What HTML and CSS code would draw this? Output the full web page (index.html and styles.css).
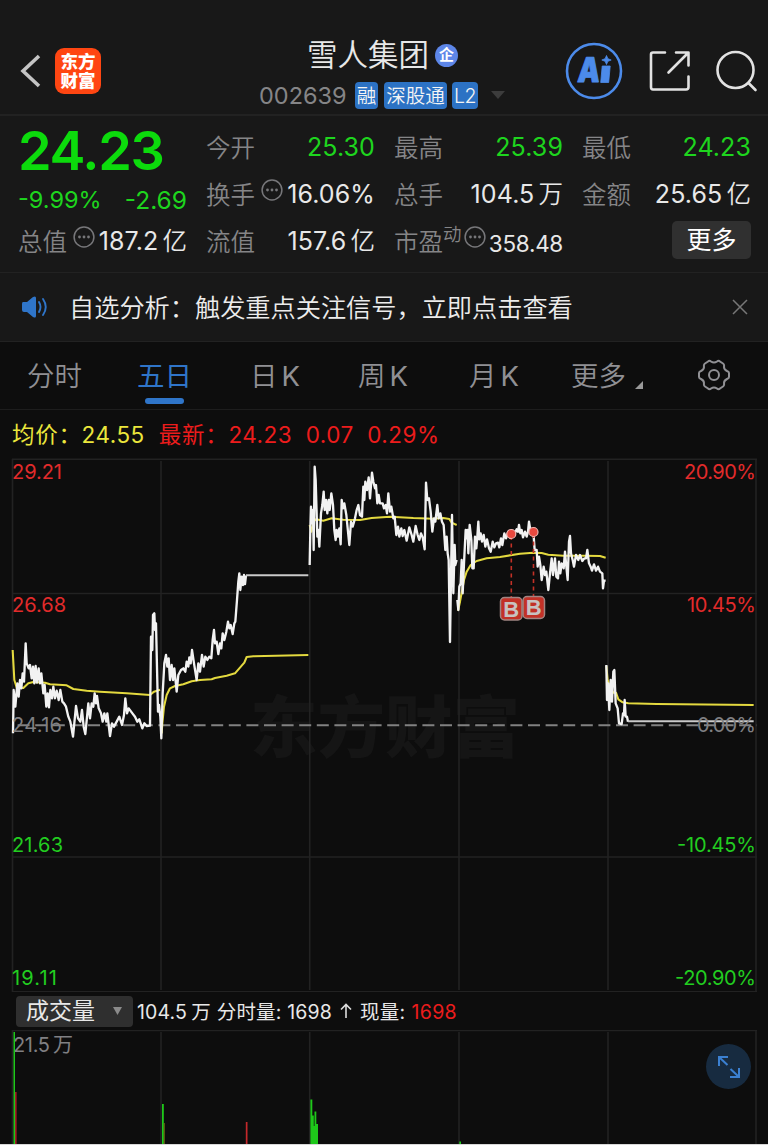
FILE: index.html
```html
<!DOCTYPE html>
<html lang="zh-CN">
<head>
<meta charset="utf-8">
<title>雪人集团 002639</title>
<link rel="stylesheet" href="styles.css">
</head>
<body>
<header class="header">
  <div class="header-left">
    <svg class="back" width="22" height="36" viewBox="0 0 22 36"><path d="M20 3 4 18 20 33" fill="none" stroke="#c4c4c4" stroke-width="3.600"/></svg>
    <div class="logo"><span>东方</span><span>财富</span></div>
  </div>
  <div class="stock">
    <div class="stock-name"><span>雪人集团</span><i class="corp">企</i></div>
    <div class="stock-code"><span class="code">002639</span><b class="tag">融</b><b class="tag wide">深股通</b><b class="tag lv">L2</b><svg width="14" height="8" viewBox="0 0 14 8"><path d="M0 0h14L7 8z" fill="#3c3c3c"/></svg></div>
  </div>
  <div class="header-right">
    <svg width="58" height="58" viewBox="0 0 58 58"><circle cx="29" cy="29" r="27" fill="none" stroke="#4c8bea" stroke-width="2.600"/><text transform="translate(12 40) skewX(-5) scale(.82 1)" class="ai">A</text><path d="M37.200 24h8l-1.500 16.500h-8z M41.500 13.500l1.400 3.200 3.300 1.300-3.300 1.300-1.400 3.200-1.400-3.200-3.300-1.300 3.300-1.300z" fill="#4c8bea" stroke="#4c8bea" stroke-width=".8" stroke-linejoin="round"/></svg>
    <svg width="42" height="42" viewBox="0 0 42 42" fill="none" stroke="#e2e2e2" stroke-width="2.600" stroke-linecap="round" stroke-linejoin="round"><path d="M16 2.500H4Q2 2.500 2 4.500V37Q2 39.500 4 39.500H37Q39.500 39.500 39.500 37V26.500M27 2.500H39.500V15.500M39 3 19.500 22.500"/></svg>
    <svg width="42" height="42" viewBox="0 0 42 42" fill="none" stroke="#e2e2e2" stroke-width="2.600" stroke-linecap="round"><circle cx="19.500" cy="20" r="18"/><path d="m32.500 33 7 7"/></svg>
  </div>
</header>

<section class="quote">
  <div class="col first">
    <div class="price">24.23</div>
    <div class="change"><span>-9.99%</span><span>-2.69</span></div>
    <div class="cell"><span class="label">总值</span><svg class="dots" viewBox="0 0 22 22"><use href="#more-dots"/></svg><span class="value">187.2<em>亿</em></span></div>
  </div>
  <div class="col">
    <div class="cell"><span class="label">今开</span><span class="value green">25.30</span></div>
    <div class="cell"><span class="label">换手</span><svg class="dots" viewBox="0 0 22 22"><use href="#more-dots"/></svg><span class="value">16.06%</span></div>
    <div class="cell"><span class="label">流值</span><span class="value">157.6<em>亿</em></span></div>
  </div>
  <div class="col">
    <div class="cell"><span class="label">最高</span><span class="value green">25.39</span></div>
    <div class="cell"><span class="label">总手</span><span class="value">104.5<em>万</em></span></div>
    <div class="cell"><span class="label">市盈</span><span class="sup">动</span><svg class="dots tight" viewBox="0 0 22 22"><use href="#more-dots"/></svg><span class="value small">358.48</span></div>
  </div>
  <div class="col">
    <div class="cell"><span class="label">最低</span><span class="value green">24.23</span></div>
    <div class="cell"><span class="label">金额</span><span class="value">25.65<em>亿</em></span></div>
    <div class="cell more-row"><span class="more">更多</span></div>
  </div>
</section>

<section class="notice">
  <svg width="28" height="22" viewBox="0 0 28 22"><path d="M1 6h4l6-5Q14-.5 14 2V20q0 2.500-3 1L5 16H2Q0 16 0 14V8q0-2 1-2z" fill="#2f75c9"/><path d="M17 6q3 5 0 10M21 3q5.500 8 0 16" fill="none" stroke="#2f75c9" stroke-width="1.900" stroke-linecap="round"/></svg>
  <span class="notice-text">自选分析：触发重点关注信号，立即点击查看</span>
  <svg width="16" height="16" viewBox="0 0 16 16"><path d="M1 1 15 15M15 1 1 15" stroke="#777" stroke-width="1.500"/></svg>
</section>

<nav class="tabs">
  <span class="tab">分时</span>
  <span class="tab active">五日</span>
  <span class="tab">日<u>K</u></span>
  <span class="tab">周<u>K</u></span>
  <span class="tab">月<u>K</u></span>
  <span class="tab drop">更多<svg width="8" height="8" viewBox="0 0 8 8"><path d="M8 0V8H0z" fill="#999"/></svg></span>
  <svg class="gear" width="34" height="32" viewBox="0 0 34 32" fill="none" stroke="#909094" stroke-width="2"><path d="M11 2.500Q12.500 1 14 2.500Q17 4.500 20 2.500Q21.500 1 23 2.500L26 4.500Q27.500 5.500 27 8Q27 10.500 30 12Q32 12.800 32 14V18Q32 19.200 30 20Q27 21.500 27 24Q27.500 26.500 26 27.500L23 29.500Q21.500 31 20 29.500Q17 27.500 14 29.500Q12.500 31 11 29.500L8 27.500Q6.500 26.500 7 24Q7 21.500 4 20Q2 19.200 2 18V14Q2 12.800 4 12Q7 10.500 7 8Q6.500 5.500 8 4.500Z"/><circle cx="17" cy="16" r="5"/></svg>
</nav>

<div class="legend">
  <span class="avg key">均价：</span><span class="avg n1">24.55</span>
  <span class="latest key">最新：</span><span class="latest n2">24.23</span><span class="latest n3">0.07</span><span class="latest">0.29%</span>
</div>

<svg class="chart" width="768" height="534" viewBox="0 458 768 534">
  <text class="watermark" x="250" y="752" textLength="270">东方财富</text>
  <g class="grid">
    <path d="M12 459.200H757M12 593.500H757M12 857H757M12 991.700H757M12.500 459V992M161 461V990M309.700 461V990M459 461V990M608 461V990M756 459V992"/>
  </g>
  <path d="M12 725.200H757" stroke="#818181" stroke-width="2" stroke-dasharray="12 5.600" stroke-dashoffset="12"/>
  <g class="red axis"><text x="12" y="478.500" textLength="50">29.21</text><text x="12" y="611.500" textLength="54">26.68</text><text x="684" y="478.500" textLength="72">20.90%</text><text x="687" y="611.500" textLength="69">10.45%</text></g>
  <g class="green axis"><text x="12" y="852" textLength="51">21.63</text><text x="12" y="985" textLength="45">19.11</text><text x="677" y="852" textLength="79">-10.45%</text><text x="675" y="985" textLength="81">-20.90%</text></g>
  <g class="line avgline" transform="translate(0 450) scale(.33333)">
    <path d="M38 600 43 690 50 712 70 714 85 700 100 696 135 698 150 703 200 706 220 717 260 722 300 725 380 730 450 735 462 725 480 719"/>
    <path d="M485 850 487 820 492 770 500 735 510 715 525 708 550 703 575 694 600 690 635 688 645 684 680 677 705 670 718 655 733 638 740 621 760 619 925 615"/>
  </g>
  <g class="line avgline" transform="translate(300 450) scale(.33333)">
    <path d="M29 225 34 245 40 215 48 208 70 212 95 205 130 209 180 210 215 204 270 200 340 204 400 206 430 204 448 207 455 218 470 225"/>
  </g>
  <g class="line avgline" transform="translate(440 450) scale(.33333)">
    <path d="M54 482 60 455 72 390 80 365 92 345 110 333 140 325 180 321 240 311 280 308 305 309 325 314 370 317 430 317 480 318 497 323"/>
    <path d="M499 648 503 690 510 712 520 728 528 728 535 748 548 757 565 760 650 762 941 765"/>
  </g>
  <g class="line" transform="translate(0 450) scale(.33333)">
    <path d="M39 850 41 720 46 770 52 700 56 740 60 690 64 715 68 670 72 695 77 580 80 640 86 655 90 645 95 685 99 650 103 700 107 648 111 698 116 655 120 700 124 670 130 730 134 705 139 770 143 730 147 772 151 720 156 745 160 710 165 745 170 722 176 750 181 720 187 755 192 760 198 770 205 800 211 815 219 860 228 768 234 805 241 815 246 780 251 830 256 852 265 760 270 805 275 760 280 770 284 730 288 760 291 738 296 775 303 790 308 815 313 790 319 815 322 790 330 858 336 820 342 830 350 815 358 800 366 825 372 795 376 745 381 790 386 775 395 787 405 800 412 815 418 808 427 835 433 820 440 828 450 827 453 560 457 600 459 495 463 490 465 540 468 520 474 785 477 765 481 800 484 865 488 730 493 640 498 615 502 650 506 625 510 690 515 645 519 690 523 655 530 725 535 675 543 660 550 655 556 665 560 635 565 650 568 622 572 640 576 600 582 640 590 690 595 640 600 665 606 615 611 650 616 620 622 630 628 620 634 625 638 570 642 540 645 580 650 575 655 612 660 580 664 595 668 550 673 570 679 545 684 515 688 535 692 525 698 552 703 520 706 515 711 450 715 395 718 370 721 420 725 380 729 405 732 375 735 402 738 376"/>
    <path class="flat" d="M738 376H925"/>
  </g>
  <g class="line" transform="translate(300 450) scale(.33333)">
    <path d="M29 345 31 240 33 170 36 220 39 180 41 300 44 50 47 90 52 260 55 240 58 290 63 190 67 165 71 125 74 180 78 150 82 190 86 150 89 180 94 130 99 165 103 240 107 270 110 240 114 260 118 235 122 283 125 150 129 175 133 160 139 195 148 285 153 215 158 230 165 205 170 180 175 165 180 195 186 200 190 110 193 150 196 95 201 120 206 82 210 145 216 68 220 95 225 115 228 105 232 160 236 135 240 160 248 160 252 175 257 165 261 190 265 130 270 185 274 170 280 205 284 200 289 255 294 230 298 260 304 235 308 258 313 240 320 272 328 232 335 255 340 275 347 228 353 255 358 270 363 250 368 262 374 298 378 98 382 150 387 145 392 185 397 245 402 205 406 215 412 165 416 205 421 190 426 215 431 225 436 300 440 260 443 310 446 330 450 576 456 195 460 430 464 285 466 345 470 330"/>
  </g>
  <g class="line" transform="translate(440 450) scale(.33333)">
    <path d="M52 450 55 480 58 410 62 400 65 330 68 430 72 340 77 240 80 265 83 240 85 310 89 225 94 270 97 355 101 355 105 260 109 295 112 260 115 215 118 268 122 250 126 275 131 255 136 290 141 268 147 295 152 305 158 275 163 292 168 280 174 278 178 292 183 265 187 285 193 250 198 265 205 245 213 252 222 255 230 238 234 245 237 225 241 250 245 240 249 262 255 245 260 260 264 245 267 215 271 240 280 245 284 300 290 300 293 350 297 320 301 345 305 390 311 350 315 375 319 365 325 420 330 370 335 325 339 375 345 325 349 380 354 385 357 335 361 370 365 340 371 355 375 305 379 350 383 390 387 275 390 258 393 310 398 330 402 350 408 315 415 330 420 315 427 333 433 325 438 325 442 300 447 340 452 350 456 362 462 343 468 362 474 350 480 365 487 370 489 415 492 392 497 392"/>
    <path d="M499 645 501 750 504 700 508 780 512 690 516 755 520 665 523 660 527 760 533 775 537 820 545 822 549 790 552 795 554 750 557 800 561 800 564 815"/>
    <path class="flat" d="M564 814H941"/>
  </g>
  <g class="gray axis"><text x="12" y="731.500" textLength="50">24.16</text><text x="697" y="731.500" textLength="59">0.00%</text></g>
  <g class="marks">
    <path d="M511.300 536V597M533.500 534V597" stroke="#c23127" stroke-width="1.600" stroke-dasharray="4 3.500"/>
    <circle cx="511.300" cy="534" r="4.500"/><circle cx="533.500" cy="532" r="4.500"/>
    <rect x="500.500" y="597.500" width="21.500" height="22.500" rx="4"/><rect x="523" y="596.500" width="21.500" height="22" rx="4"/>
    <text x="511.300" y="616.500">B</text><text x="533.600" y="615">B</text>
  </g>
</svg>

<div class="volume-bar">
  <div class="select"><span>成交量</span><svg width="9" height="8" viewBox="0 0 9 8"><path d="M0 0h9L4.500 8z" fill="#8a8a8a"/></svg></div>
  <span class="vt t1">104.5<em>万</em></span><span class="vt t2">分时量: 1698</span>
  <svg class="up" width="14" height="16" viewBox="0 0 14 16"><path d="M7 15V1.500M2 6.500l5-5 5 5" fill="none" stroke="#ddd" stroke-width="1.600"/></svg>
  <span class="vt t3">现量: <b class="latest">1698</b></span>
</div>

<div class="volume">
  <svg width="768" height="114" viewBox="0 1030 768 114">
    <g class="grid"><path d="M12 1030.500H757M12.500 1030V1144M161 1032V1144M309.700 1032V1144M459 1032V1144M608 1032V1144M756 1030V1144"/></g>
    <g class="gray axis"><text x="13" y="1052" textLength="37">21.5</text><text x="53" y="1052" textLength="19">万</text></g>
    <g fill="#1ec81a"><path d="M13.500 1032H15V1144H13.500zM162 1104h1.800v40H162zM310.400 1099.500h1.900v16h1.500V1126h.7v-14.500h1.800V1124h1.700v20h-7.600zM459.300 1141.500h1.700v2.500h-1.700z"/></g>
    <g fill="#c4282b"><path d="M15.200 1092h1.300v52h-1.300zM245.800 1122h1.700v22h-1.700z"/></g>
    <path d="M163.800 1123h.9v21h-.9z" fill="#806f17"/>
  </svg>
  <button class="expand" aria-label="全屏"><svg width="24" height="24" viewBox="0 0 24 24" fill="none" stroke="#3b80d1" stroke-width="2"><path d="M2 11V2H11M2 2l8.500 8M22 13v9H13M22 22l-8.500-8"/></svg></button>
</div>
<svg class="defs" width="0" height="0"><defs><g id="more-dots"><circle cx="11" cy="11" r="9.900" fill="none" stroke="#77777a" stroke-width="1.500"/><g fill="#77777a"><circle cx="6.500" cy="11" r="1.400"/><circle cx="11" cy="11" r="1.400"/><circle cx="15.500" cy="11" r="1.400"/></g></g></defs></svg>
</body>
</html>
```

FILE: styles.css
```css
* { box-sizing: border-box; }
body {
  margin: 0;
  width: 768px;
  height: 1145px;
  overflow: hidden;
  background: #0d0d0d;
  color: #e8e8e8;
  font-family: Inter, "Noto Sans CJK SC", sans-serif;
  border-bottom: 1px solid #d8d8d8;
  display: flex;
  flex-direction: column;
}
svg { display: block; flex: none; }
em, i, b, u { font-style: normal; font-weight: 400; text-decoration: none; }
span { white-space: nowrap; }

.header {
  height: 116px;
  flex: none;
  background: #181818;
  border-bottom: 2px solid #222;
  display: grid;
  grid-template-columns: 259px 1fr 203px;
  padding-top: 34px;
}
.header-left { display: flex; align-items: center; padding-left: 19px; gap: 14px; height: 74px; }
.logo {
  width: 46px; height: 46px; border-radius: 9px;
  background: #ff4612; color: #fff;
  font-size: 17.500px; font-weight: 900; line-height: 19px;
  display: flex; flex-direction: column; align-items: center; justify-content: center;
}
.stock-name { display: flex; align-items: center; gap: 6px; padding-left: 48px; height: 42px; font-size: 30.500px; font-weight: 350; line-height: 42px; }
.stock-name > span { margin-top: -1px; }
.corp { width: 23px; height: 23px; border-radius: 50%; background: #5d86e8; color: #fff; font-size: 15px; font-weight: 700; line-height: 22px; text-align: center; }
.stock-code { display: flex; align-items: center; height: 38px; white-space: nowrap; }
.code { width: 87px; font-size: 23.500px; color: #858587; margin-right: 9px; }
.tag { width: 23px; height: 27px; border-radius: 4px; background: #2c72c4; color: #f4f4f4; font-size: 19.500px; font-weight: 350; line-height: 28px; text-align: center; margin-right: 6px; }
.tag.wide { width: 63px; margin-right: 5px; }
.tag.lv { width: 26px; margin-right: 13px; letter-spacing: -.5px; }
.header-right { display: flex; align-items: center; gap: 25.500px; height: 74px; }
.ai { font: 900 34px Inter, sans-serif; fill: #4c8bea; stroke: #4c8bea; stroke-width: 1px; stroke-linejoin: round; }

.quote {
  height: 157px; flex: none; background: #181818;
  border-bottom: 1px solid #222;
  display: grid; grid-template-columns: repeat(4, 169px); gap: 19px;
  padding: 8px 18px;
}
.col { display: grid; grid-template-rows: 47px 47px 47px; }
.first { grid-template-rows: 61px 33px 47px; }
.price { color: #0cdb0c; font-size: 54px; font-weight: 600; line-height: 53px; letter-spacing: -1.300px; }
.change { display: flex; justify-content: space-between; align-items: center; padding-bottom: 4px; color: #1ed51e; font-size: 23.500px; }
.change span:last-child { font-size: 24.500px; }
.cell { display: flex; align-items: center; font-size: 25px; line-height: 44px; }
.label { color: #858587; font-size: 24.500px; font-weight: 350; line-height: 46px; }
.value { margin-left: auto; letter-spacing: .1px; margin-top: -1px; }
.value em { margin-left: 4px; font-size: 24.500px; font-weight: 350; }
.green { color: #1ed51e; }
.small { font-size: 22.500px; letter-spacing: -.3px; padding-top: 5px; }
.dots { width: 22px; height: 22px; margin: -10px 0 0 6px; }
.sup { color: #858587; font-size: 18.500px; font-weight: 350; margin-top: -16px; }
.tight { margin-left: 2px; }
.more-row { justify-content: flex-end; }
.more { width: 79px; height: 38px; margin-top: -3px; border-radius: 5px; background: #303030; line-height: 38px; text-align: center; color: #fff; }

.notice { height: 69px; flex: none; background: #181818; border-bottom: 1px solid #222; display: flex; align-items: center; padding: 0 20px 0 22px; }
.notice-text { margin: -3px auto 0 19px; font-size: 25.200px; font-weight: 350; color: #ececec; }

.tabs { height: 68px; flex: none; border-bottom: 1px solid #1d1d1d; display: flex; align-items: center; padding-left: 27px; color: #909094; font-size: 27.500px; font-weight: 350; }
.tab { position: relative; height: 67px; line-height: 69px; width: 110px; flex: none; }
.tab u { margin-left: 4px; }
.tab:nth-child(2) { width: 113px; }
.tab:nth-child(3) { width: 108px; }
.tab:nth-child(4) { width: 111px; }
.tab:nth-child(5) { width: 102px; }
.drop { display: flex; gap: 9px; width: 126px; }
.drop svg { margin-top: 39px; }
.gear { margin-top: -1px; }
.active { color: #2f75c9; font-weight: 400; }
.active::after { content: ""; position: absolute; left: 8px; bottom: 5px; width: 39px; height: 6px; border-radius: 3px; background: #2f75c9; }

.legend { height: 48px; flex: none; display: flex; align-items: center; padding: 2px 0 0 12px; font-size: 22.500px; line-height: 46px; letter-spacing: .5px; }
.key { letter-spacing: .7px; margin-top: -1px; }
.avg { color: #ebe63c; }
.latest { color: #ec1c1c; }
.n1 { margin-right: 14px; }
.n2, .n3 { margin-right: 13.500px; }

.grid path { fill: none; stroke: #222; stroke-width: 1.600; }
.line path { fill: none; stroke: #f2f2f2; stroke-width: 7; stroke-linejoin: round; }
.line .flat { stroke: #c9c9c9; stroke-width: 6; }
.line.avgline path { stroke: #e3d93f; stroke-width: 6.200; }
.axis { font-size: 20px; }
.red { fill: #e22b2b; }
.axis.green { fill: #22cd20; }
.gray { fill: #808083; }
.watermark { font-size: 67.500px; font-weight: 900; fill: #151515; }
.marks circle { fill: #e8493f; stroke: #eeb4af; stroke-width: 1.200; }
.marks rect { fill: #c23127; stroke: #a08582; stroke-width: 1.500; }
.marks text { font: 700 22px "Liberation Sans", sans-serif; fill: #c8c2c1; text-anchor: middle; }

.volume-bar { height: 38px; flex: none; display: flex; align-items: center; padding-left: 16px; font-size: 19.500px; }
.select { width: 117px; height: 31px; border-radius: 4px; background: #2f2f2f; display: flex; align-items: center; justify-content: space-between; padding: 0 11px 0 10px; font-size: 23px; line-height: 33px; }
.vt { letter-spacing: .15px; line-height: 36px; margin-top: 1px; }
.t1 { margin-left: 4px; margin-right: 6px; }
.t1 em { margin-left: 4px; }
.up { margin: 0 7px; }
.t3 { letter-spacing: .35px; }
.volume { position: relative; height: 114px; flex: none; }
.expand { position: absolute; left: 706px; top: 14px; width: 45px; height: 45px; border: 0; border-radius: 50%; background: #172b40; display: flex; align-items: center; justify-content: center; padding: 0; }
.defs { position: absolute; }
```
